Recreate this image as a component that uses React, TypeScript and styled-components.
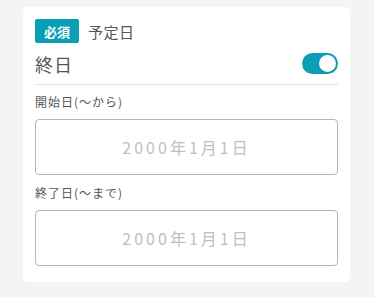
import React from "react";
import styled, { createGlobalStyle } from "styled-components";

const Global = createGlobalStyle`
  html, body { margin: 0; padding: 0; background: #f4f4f4; }
  body { font-family: "Noto Sans CJK JP", "Noto Sans", sans-serif; }
`;

const Page = styled.div`
  padding: 7px 24px 16px 23px;
`;

const Card = styled.section`
  background: #fff;
  border-radius: 5px;
  padding: 12px 12px 16px 12px;
  display: flex;
  flex-direction: column;
`;

const Header = styled.div`
  display: flex;
  align-items: center;
  gap: 9px;
  height: 24px;
`;

const Badge = styled.span`
  display: inline-flex;
  align-items: center;
  justify-content: center;
  width: 44px;
  height: 24px;
  border-radius: 2px;
  background: #0b9fb6;
  color: #fff;
  font-size: 13px;
  font-weight: 700;
  line-height: 1;
`;

const Title = styled.span`
  font-size: 15px;
  color: #555;
  letter-spacing: 0.5px;
`;

const Row = styled.div`
  display: flex;
  align-items: center;
  justify-content: space-between;
  height: 29px;
  margin-top: 6px;
  padding-bottom: 6px;
  border-bottom: 1px solid #e2e2e8;
`;

const RowLabel = styled.span`
  font-size: 18px;
  color: #555;
  letter-spacing: 1px;
`;

const Toggle = styled.span<{ $on: boolean }>`
  position: relative;
  width: 36px;
  height: 21px;
  border-radius: 11px;
  background: ${(p) => (p.$on ? "#0b9fb6" : "#ccc")};
  display: inline-block;
  &::after {
    content: "";
    position: absolute;
    top: 2px;
    left: ${(p) => (p.$on ? "17px" : "2px")};
    width: 17px;
    height: 17px;
    border-radius: 50%;
    background: #fff;
    box-shadow: 0 1px 2px rgba(0, 0, 0, 0.15);
  }
`;

const FieldLabel = styled.div<{ $gap: number }>`
  font-size: 12px;
  color: #555;
  letter-spacing: 1px;
  margin-top: ${(p) => p.$gap}px;
  height: 18px;
  line-height: 18px;
`;

const DateBox = styled.div`
  margin-top: 8px;
  height: 54px;
  border: 1px solid #b5b5b5;
  border-radius: 4px;
  display: flex;
  align-items: center;
  justify-content: center;
  font-size: 16px;
  letter-spacing: 3px;
  color: #c2bebb;
`;

const Field = ({ label, value, gap }: { label: string; value: string; gap: number }) => (
  <>
    <FieldLabel $gap={gap}>{label}</FieldLabel>
    <DateBox>{value}</DateBox>
  </>
);

export default function App() {
  return (
    <>
      <Global />
      <Page>
        <Card>
          <Header>
            <Badge>必須</Badge>
            <Title>予定日</Title>
          </Header>
          <Row>
            <RowLabel>終日</RowLabel>
            <Toggle $on />
          </Row>
          <Field gap={8} label="開始日(～から)" value="2000年1月1日" />
          <Field gap={9} label="終了日(～まで)" value="2000年1月1日" />
        </Card>
      </Page>
    </>
  );
}
